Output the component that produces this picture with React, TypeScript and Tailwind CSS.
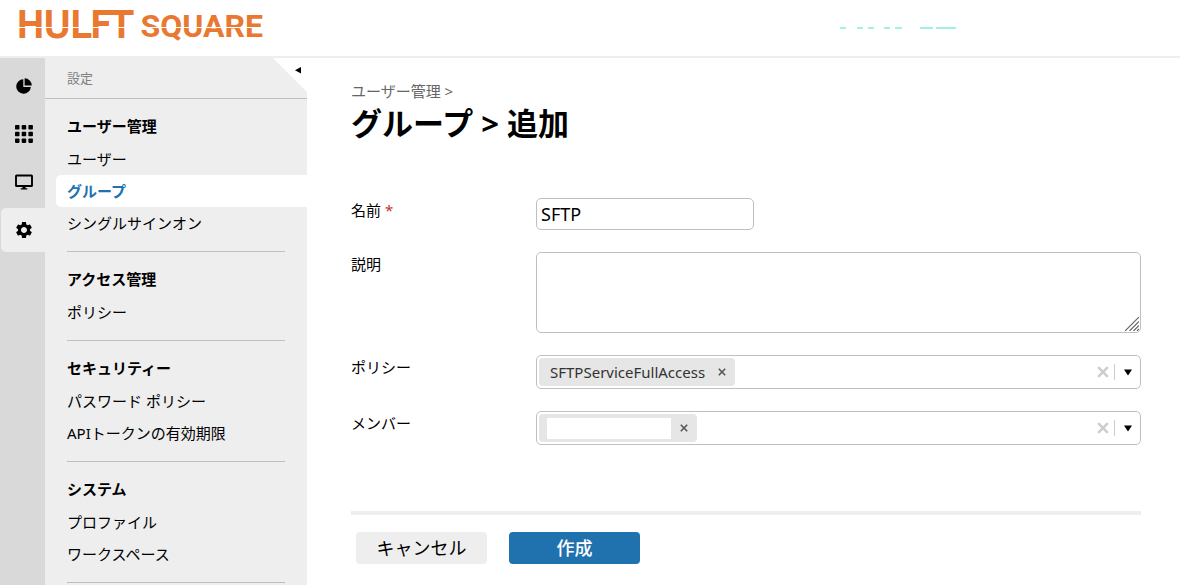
import type { ReactNode } from 'react';
import { MdSettings } from 'react-icons/md';

const menu = [
  { title: 'ユーザー管理', items: ['ユーザー', 'グループ', 'シングルサインオン'] },
  { title: 'アクセス管理', items: ['ポリシー'] },
  { title: 'セキュリティー', items: ['パスワード ポリシー', 'APIトークンの有効期限'] },
  { title: 'システム', items: ['プロファイル', 'ワークスペース'] },
];

const PieIcon = () => (
  <svg className="w-4 h-4" viewBox="0 0 16 16">
    <path d="M7.3 1.2A7.3 7.3 0 1 0 14.8 8.9H7.3z" />
    <path d="M8.6 0.3A7.3 7.3 0 0 1 15.8 7.5H8.6z" />
  </svg>
);

const GridIcon = () => (
  <svg className="w-[18px] h-[18px]" viewBox="0 0 18 18">
    {[0, 6.7, 13.4].map((y) =>
      [0, 6.7, 13.4].map((x) => <rect key={`${x}-${y}`} x={x} y={y} width="4.5" height="4.5" rx="0.8" />)
    )}
  </svg>
);

const MonitorIcon = () => (
  <svg className="w-[18px] h-4" viewBox="0 0 18 16">
    <rect x="1" y="1.5" width="16" height="10.5" rx="0.6" fill="none" stroke="#000" strokeWidth="1.9" />
    <path d="M7.5 12.5h3v1.8h1.8v1.2H5.7v-1.2h1.8z" />
  </svg>
);

const rail = [
  { label: 'ダッシュボード', icon: <PieIcon /> },
  { label: 'アプリケーション', icon: <GridIcon /> },
  { label: 'モニター', icon: <MonitorIcon /> },
  { label: '設定', icon: <MdSettings className="w-5 h-5" />, active: true },
];

function Cross({ className }: { className: string }) {
  return (
    <svg className={className} viewBox="0 0 10 10" fill="none" stroke="currentColor" strokeWidth="2">
      <path d="M1 1l8 8M9 1L1 9" />
    </svg>
  );
}

function MultiSelect({ id, children }: { id: string; children: ReactNode }) {
  return (
    <div className="flex items-center h-[34px] pl-[2px] pr-2 border border-[#bfbfbf] rounded-[5px] bg-white">
      <div className="flex items-center h-7 pl-[11px] pr-2 rounded bg-[#e6e6e6] text-[15px] text-[#333]">
        {children}
        <button type="button" aria-label="削除" className="ml-3 p-px text-[#555]">
          <Cross className="w-2 h-2" />
        </button>
      </div>
      <input id={id} role="combobox" aria-expanded="false" className="flex-1 min-w-0 h-7 px-2 outline-none" />
      <button type="button" aria-label="クリア" className="text-[#ccc]">
        <Cross className="w-3 h-3" />
      </button>
      <span className="w-px h-4 ml-[5px] mr-[9px] bg-[#ccc]" />
      <button type="button" aria-label="開く">
        <svg className="w-2 h-[7px]" viewBox="0 0 8 7">
          <path d="M0 0.5h8L4 6.5z" />
        </svg>
      </button>
    </div>
  );
}

function Header() {
  return (
    <header className="flex items-center justify-between h-[58px] pl-[17px] pr-[224px] border-b-2 border-[#eee]">
      <a href="#" className="relative flex items-baseline gap-2 pb-[6px] text-[#e97830] leading-10">
        <span className="font-['DejaVu_Sans'] text-[36px] [-webkit-text-stroke:2px_#e97830]">HULFT</span>
        <span className="font-[Roboto] text-[32px] font-bold">SQUARE</span>
        <span className="absolute inset-x-0 top-[22px] h-px bg-white" />
      </a>
      <svg className="w-[116px] h-[2px]" viewBox="0 0 116 2" stroke="#a0f2e8" strokeWidth="2">
        <path d="M0 1h6M17 1h6M28 1h6M44 1h6M55 1h7M80 1h13M96 1h20" />
      </svg>
    </header>
  );
}

function Sidebar() {
  return (
    <aside className="flex flex-shrink-0">
      <nav className="flex flex-col gap-1 w-[45px] pt-[6px] pl-px bg-[#d9d9d9]">
        {rail.map((item) => (
          <button
            key={item.label}
            type="button"
            aria-label={item.label}
            className={
              item.active
                ? 'flex items-center justify-center h-11 pl-[2px] rounded-l-[5px] bg-[#eee]'
                : 'flex items-center justify-center h-11 pl-[2px]'
            }
          >
            {item.icon}
          </button>
        ))}
      </nav>
      <nav className="relative w-[262px] bg-[#eee] text-[15px]">
        <div className="h-[41px] pl-[22px] border-b border-[#bfbfbf] text-[13px] leading-10 text-[#808080]">設定</div>
        <button type="button" aria-label="閉じる" className="absolute top-0 right-0 w-[34px] h-[34px]">
          <svg className="w-full h-full" viewBox="0 0 34 34">
            <path d="M0 0h34v34z" fill="#fff" />
            <path d="M28 9v6.5l-6-3.2z" />
          </svg>
        </button>
        {menu.map((section) => (
          <div key={section.title}>
            <div className="py-3">
              <h2 className="pl-[22px] pb-[2px] font-bold leading-[30px]">{section.title}</h2>
              <ul>
                {section.items.map((item) => (
                  <li key={item} className="pl-[11px]">
                    <a
                      href="#"
                      className={
                        item === 'グループ'
                          ? 'block pl-[11px] leading-8 rounded-l-[5px] bg-white font-bold text-[#2072af]'
                          : 'block pl-[11px] leading-8'
                      }
                    >
                      {item}
                    </a>
                  </li>
                ))}
              </ul>
            </div>
            <hr className="mx-[22px] border-[#bfbfbf]" />
          </div>
        ))}
      </nav>
    </aside>
  );
}

export default function App() {
  return (
    <div className="min-h-screen flex flex-col bg-white text-black font-['Noto_Sans','Noto_Sans_CJK_JP',sans-serif]">
      <Header />
      <div className="flex flex-1">
        <Sidebar />
        <main className="flex-1 min-w-0 pt-[21px] pl-11 pr-[39px]">
          <p className="text-[15px] leading-6 text-[#666]">ユーザー管理 &gt;</p>
          <h1 className="text-[31px] leading-10 font-bold">グループ &gt; 追加</h1>

          <form onSubmit={(e) => e.preventDefault()}>
            <div className="grid grid-cols-[185px_1fr] gap-y-[22px] mt-[55px] text-[15px]">
              <label htmlFor="name" className="leading-6">
                名前 <span className="text-[#c9302c]">*</span>
              </label>
              <input
                id="name"
                defaultValue="SFTP"
                className="w-[218px] h-8 px-1 border border-[#bfbfbf] rounded-[5px] text-[18px]"
              />

              <label htmlFor="description" className="leading-6">説明</label>
              <div className="relative h-[81px]">
                <textarea
                  id="description"
                  className="block w-full h-full px-1 border border-[#bfbfbf] rounded-[5px] resize-none"
                />
                <svg
                  className="absolute right-[2px] bottom-[2px] w-[14px] h-[14px]"
                  viewBox="0 0 14 14"
                  stroke="#666"
                  strokeWidth="1.2"
                >
                  <path d="M0 14L14 0M4.5 14L14 4.5M8.5 14L14 8.5M12 14l2-2" />
                </svg>
              </div>

              <label htmlFor="policy" className="leading-6">ポリシー</label>
              <MultiSelect id="policy">SFTPServiceFullAccess</MultiSelect>

              <label htmlFor="member" className="leading-6">メンバー</label>
              <MultiSelect id="member">
                <span className="-ml-[3px] -mr-1 w-[124px] h-[21px] bg-white" />
              </MultiSelect>
            </div>

            <hr className="mt-[66px] border-t-4 border-[#eee]" />
            <div className="flex gap-[22px] mt-[17px] pl-[5px] text-[18px]">
              <button type="button" className="w-[131px] h-8 rounded bg-[#eee]">キャンセル</button>
              <button type="submit" className="w-[131px] h-8 rounded bg-[#2072af] font-medium text-white">作成</button>
            </div>
          </form>
        </main>
      </div>
    </div>
  );
}
